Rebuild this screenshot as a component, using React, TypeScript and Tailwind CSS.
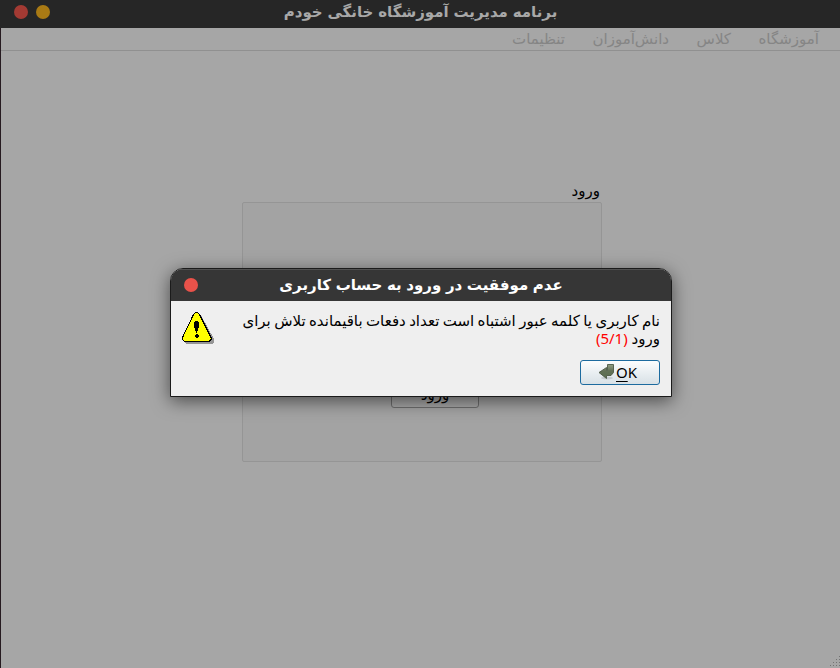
import React from "react";

const textFont = "font-['Noto_Sans','DejaVu_Sans',sans-serif]";

const menuItems = [
  { label: "آموزشگاه", width: "w-[61px]" },
  { label: "کلاس", width: "w-[35px]" },
  { label: "دانش‌آموزان", width: "w-[77px]" },
  { label: "تنظیمات", width: "w-[54px]" },
];

function TitleBar() {
  return (
    <header className="grid h-7 shrink-0 grid-cols-[1fr_auto_1fr] items-center bg-[#262626] pb-1">
      <div className="flex gap-2 pl-3.5">
        <span className="size-3.5 rounded-full bg-[#a33a33]" />
        <span className="size-3.5 rounded-full bg-[#a97a14]" />
      </div>
      <h1 dir="rtl" className="-mt-0.5 -mr-px whitespace-nowrap text-[15px] leading-6 font-bold text-[#a8a8a8] [word-spacing:0.9px]">
        برنامه مدیریت آموزشگاه خانگی خودم
      </h1>
    </header>
  );
}

function MenuBar() {
  return (
    <nav dir="rtl" className="flex h-[23px] shrink-0 gap-[27px] border-b border-[#909090] pr-[21px] text-[15px] leading-5 text-[#858585]">
      {menuItems.map((item) => (
        <span key={item.label} className={`whitespace-nowrap ${item.width}`}>
          {item.label}
        </span>
      ))}
    </nav>
  );
}

function WarningIcon() {
  return (
    <svg className="size-[33px] shrink-0" viewBox="0 0 33 33" shapeRendering="crispEdges">
      <path d="M16 3h2l2 2 12 22v3l-2 2H4l-2-2z" fill="#969696" />
      <path d="M13.500.5h2l2 2 11.500 23v2l-2 2H2.500l-2-2v-2l11-23z" fill="#ff0" stroke="#000" />
      <path d="M13 9h3v1h1v6h-1v3h-1v2h-1v-2h-1v-3h-1v-6h1z" fill="#000" />
      <path d="M14 22h2v1h1v2h-1v1h-2v-1h-1v-2h1z" fill="#000" />
    </svg>
  );
}

function ApplyIcon() {
  return (
    <svg className="size-4" viewBox="0 0 16 16">
      <defs>
        <linearGradient id="arrowFill" x2="0" y2="1">
          <stop stopColor="#939f85" />
          <stop offset=".45" stopColor="#637157" />
          <stop offset="1" stopColor="#596e4f" />
        </linearGradient>
      </defs>
      <ellipse cx="9" cy="14" rx="6" ry="1.500" fill="#000" opacity=".12" />
      <path d="M9.500.5h6v8l-2.500 3H8.500v3L1 8.500l7.500-5v3h1z" fill="url(#arrowFill)" stroke="#4d5946" strokeWidth=".9" />
    </svg>
  );
}

function ErrorDialog() {
  return (
    <section
      role="dialog"
      className="absolute top-[268px] left-[170px] flex h-[129px] w-[502px] flex-col overflow-hidden rounded-t-[13px] border border-[#1b1b1b] bg-[#efefef] shadow-[0_4px_18px_rgba(0,0,0,0.55)]"
    >
      <header className="grid h-8 shrink-0 grid-cols-[1fr_auto_1fr] items-center border-t border-[#515151] bg-[#363636] pb-px">
        <span className="ml-[13px] size-3.5 rounded-full bg-[#e9524a]" />
        <h2 dir="rtl" className="-mt-[3px] whitespace-nowrap text-[15px] leading-6 font-bold text-white [word-spacing:0.7px]">
          عدم موفقیت در ورود به حساب کاربری
        </h2>
      </header>
      <div className="flex flex-1 justify-between px-[11px] pt-[11px]">
        <WarningIcon />
        <div className="-mt-px flex w-[420px] flex-col">
          <p dir="rtl" className="text-[15px] leading-[18px] text-black">
            <span className="whitespace-nowrap [word-spacing:-0.5px]">نام کاربری یا کلمه عبور اشتباه است تعداد دفعات باقیمانده تلاش برای</span>
            <br />
            ورود <span dir="ltr" className="text-[#ff0000]">(5/1)</span>
          </p>
          <button className="mt-[13px] flex h-[25px] w-20 items-center self-end rounded-[3px] border border-[#1d6b9f] bg-linear-to-b from-[#fcfdfe] to-[#d8e1e6] pb-0.5 pl-[17px] text-[15px] text-black">
            <ApplyIcon />
            <span className="ml-0.5 leading-5"><span className="underline decoration-1 underline-offset-3">O</span>K</span>
          </button>
        </div>
      </div>
    </section>
  );
}

export default function App() {
  return (
    <div className={`relative flex h-[668px] w-[840px] flex-col overflow-hidden bg-[#a6a6a6] ${textFont}`}>
      <TitleBar />
      <div className="flex flex-1 flex-col border-l border-[#261a20]">
        <MenuBar />
        <main className="ml-[241px] flex w-[360px] flex-1 flex-col pt-[131px]">
          <p dir="rtl" className="h-5 pr-0.5 text-[15px] leading-4 text-black">ورود</p>
          <div className="flex h-[260px] flex-col rounded-[2px] border border-[#959595] bg-[#a3a3a3] pt-[180px] pl-[148px]">
            <button className="h-[25px] w-[88px] rounded-[3px] border border-[#6d6d6d] bg-[#a6a6a6] pb-0.5 text-[15px] leading-[19px] text-black">
              ورود
            </button>
          </div>
        </main>
        <footer className="flex justify-end">
          <svg className="size-3" viewBox="0 0 12 12" shapeRendering="crispEdges">
            <path d="M11 0h1v1h-1zM8 3h1v1H8zM11 3h1v1h-1zM5 6h1v1H5zM8 6h1v1H8zM11 6h1v1h-1zM2 9h1v1H2zM5 9h1v1H5zM8 9h1v1H8zM11 9h1v1h-1z" fill="#737373" />
          </svg>
        </footer>
      </div>
      <ErrorDialog />
    </div>
  );
}
